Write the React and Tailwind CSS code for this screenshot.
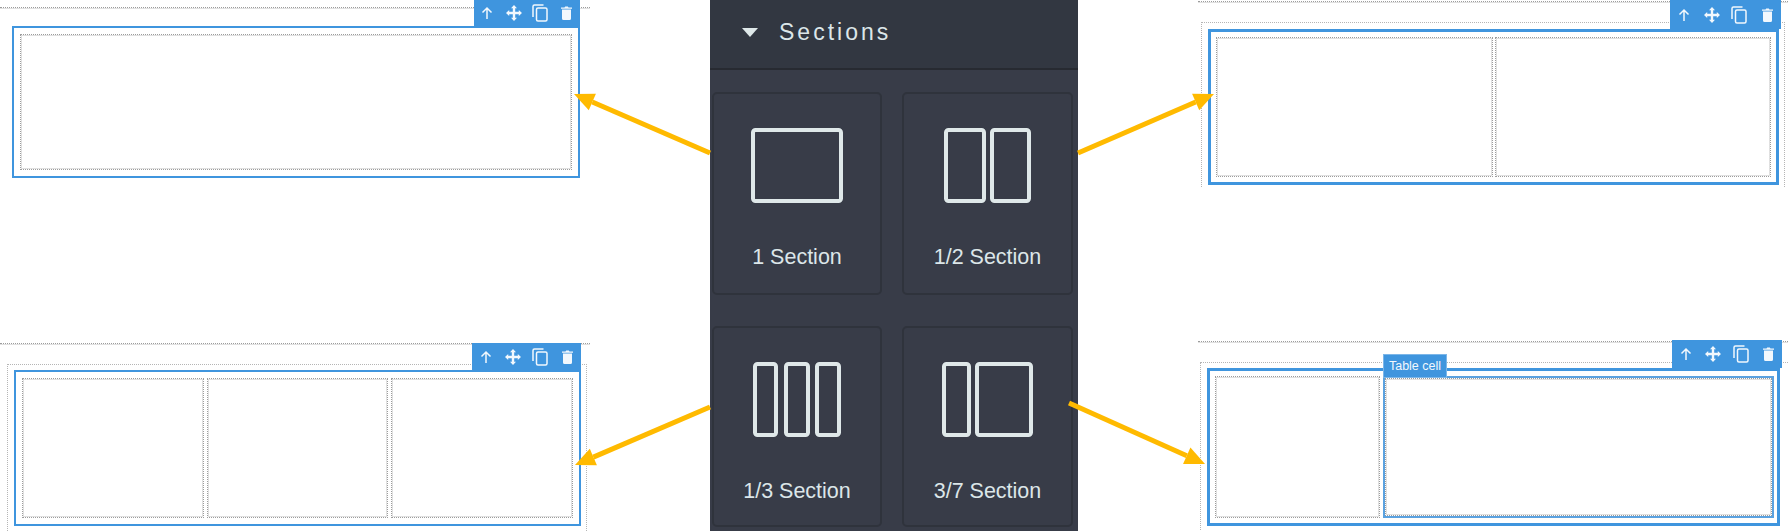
const ToolIcons = () => (
  <>
    <span className="flex items-center justify-center">
      <svg width="14" height="14" viewBox="0 0 14 14" fill="none" stroke="#f2f8fd" strokeWidth="1.5"><path d="M7 13V2M2.5 6.5 7 2l4.5 4.5" /></svg>
    </span>
    <span className="flex items-center justify-center">
      <svg width="16" height="16" viewBox="0 0 16 16" fill="#f2f8fd"><path d="M8 0l3 3.200H9.200v3.600h3.600V5l3.200 3-3.200 3V9.200H9.200v3.600H11L8 16l-3-3.200h1.800V9.200H3.200V11L0 8l3.200-3v1.800h3.600V3.200H5z" /></svg>
    </span>
    <span className="flex items-center justify-center">
      <svg width="16" height="18" viewBox="0 0 16 18" fill="none" stroke="#f2f8fd" strokeWidth="1.500"><path d="M11.500 1H2.500Q1 1 1 2.500V13" /><rect x="4.500" y="4" width="10.500" height="13" rx="1.500" /></svg>
    </span>
    <span className="flex items-center justify-center">
      <svg width="11" height="14" viewBox="0 0 11 14" fill="#f2f8fd"><path d="M0 1.500h3.500L4.200.5h2.600l.7 1H11v1.200H0zM1 3.600h9V12.500Q10 14 8.500 14h-6Q1 14 1 12.500z" /></svg>
    </span>
  </>
);

const Toolbar = ({ className }) => (
  <div className={`absolute grid grid-cols-4 bg-[#3f95de] ${className}`}>
    <ToolIcons />
  </div>
);

const cellBorder = "border border-dotted border-[#9c9c9c] shadow-[inset_0_0_0_1px_#e0e0e0]";
const hairline = "border-t border-dotted border-[#9c9c9c] shadow-[0_1px_0_#e0e0e0]";

const SectionIcon = ({ width, rects }) => (
  <svg width={width} height="75" viewBox={`0 0 ${width} 75`} fill="none" stroke="#dfe8e9" strokeWidth="4">
    {rects.map(([x, w]) => (
      <rect key={x} x={x + 2} y="2" width={w - 4} height="71" rx="2.500" />
    ))}
  </svg>
);

const Card = ({ label, width, rects, className }) => (
  <div className={`flex flex-col items-center rounded-[5px] border-2 border-[#2f333c] bg-[#383c48] ${className}`}>
    <SectionIcon width={width} rects={rects} />
    <div className="mt-[42px] text-[21.500px] leading-6 text-[#dce6e9]">{label}</div>
  </div>
);

const arrows = [
  [710, 153, 574, 94],
  [1078, 153, 1214, 94],
  [710, 407, 575, 465],
  [1069, 403, 1205, 464],
];

const Arrow = ({ a: [x1, y1, x2, y2] }) => {
  const d = Math.hypot(x2 - x1, y2 - y1);
  const ux = (x2 - x1) / d;
  const uy = (y2 - y1) / d;
  const bx = x2 - ux * 20;
  const by = y2 - uy * 20;
  const pts = `${x2},${y2} ${bx - uy * 9},${by + ux * 9} ${bx + uy * 9},${by - ux * 9}`;
  return (
    <g>
      <line x1={x1} y1={y1} x2={bx} y2={by} stroke="#ffba00" strokeWidth="5" />
      <polygon points={pts} fill="#ffba00" />
    </g>
  );
};

export default function App() {
  return (
    <div className="relative flex h-[531px] w-[1788px] overflow-hidden bg-white font-['Liberation_Sans',Arial,sans-serif]">
      {/* left column */}
      <div className="flex w-[710px] shrink-0 flex-col">
        <div className="h-[344px] pt-[7px]">
          <div className={`w-[590px] ${hairline}`} />
          <div className="relative ml-[12px] mt-[18px] h-[152px] w-[568px] border-2 border-[#3f95de] p-[6px]">
            <Toolbar className="-right-[2px] bottom-[calc(100%+2px)] h-[26px] w-[106px]" />
            <div className={`h-full ${cellBorder}`} />
          </div>
        </div>
        <div>
          <div className={`w-[590px] ${hairline}`} />
          <div className="ml-[7px] mt-[20px] h-[167px] w-[580px] border-x border-t border-dotted border-[#b5b5b5] pl-[6px] pt-[5px]">
            <div className="relative h-[156px] w-[567px] border-2 border-[#3f95de] p-[6px]">
              <Toolbar className="-right-[2px] bottom-[calc(100%+1px)] h-[28px] w-[109px]" />
              <div className="grid h-full grid-cols-3 gap-x-[3px]">
                <div className={cellBorder} />
                <div className={cellBorder} />
                <div className={cellBorder} />
              </div>
            </div>
          </div>
        </div>
      </div>

      {/* center panel */}
      <div className="h-full w-[368px] shrink-0 bg-[#383c48]">
        <div className="flex h-[70px] items-center border-b-2 border-[#272a31] bg-[#323741] pb-[4px] pl-[32px]">
          <svg width="16" height="9" viewBox="0 0 16 9" fill="#dfe8e9"><path d="M0 0h16L8 9z" /></svg>
          <span className="ml-[21px] text-[23px] leading-7 tracking-[3px] text-[#dce6e9]">Sections</span>
        </div>
        <div className="ml-[2px] mt-[22px] grid w-[361px] grid-cols-[170px_171px] gap-x-[20px] gap-y-[31px]">
          <Card className="h-[203px] pt-[34px]" label="1 Section" width={92} rects={[[0, 92]]} />
          <Card className="h-[203px] pt-[34px]" label="1/2 Section" width={87} rects={[[0, 42], [46, 41]]} />
          <Card className="h-[201px] pt-[34px]" label="1/3 Section" width={88} rects={[[0, 25], [31, 26], [62, 26]]} />
          <Card className="h-[201px] pt-[34px]" label="3/7 Section" width={91} rects={[[0, 29], [33, 58]]} />
        </div>
      </div>

      {/* right column */}
      <div className="flex flex-1 flex-col">
        <div className="h-[341px] pt-[1px]">
          <div className={`ml-[120px] ${hairline}`} />
          <div className="ml-[123px] mt-[20px] h-[165px] w-[584px] border-x border-t border-dotted border-[#b5b5b5] pl-[6px] pt-[6px]">
            <div className="relative h-[156px] w-[571px] border-[3px] border-[#3f95de] p-[5px]">
              <Toolbar className="-right-[5px] bottom-[calc(100%+3px)] h-[29px] w-[111px]" />
              <div className="grid h-full grid-cols-2 gap-x-[2px]">
                <div className={cellBorder} />
                <div className={cellBorder} />
              </div>
            </div>
          </div>
        </div>
        <div>
          <div className={`ml-[120px] ${hairline}`} />
          <div className="ml-[122px] mt-[20px] h-[168px] border-l border-t border-dotted border-[#b5b5b5] pl-[6px] pt-[5px]">
            <div className="relative h-[158px] w-[573px] border-[3px] border-[#3f95de] py-[5px] pl-[5px] pr-[3px]">
              <Toolbar className="-right-[5px] bottom-[calc(100%+3px)] h-[28px] w-[110px]" />
              <div className="flex h-full gap-x-[3px]">
                <div className={`w-[165px] ${cellBorder}`} />
                <div className="relative flex-1 border-2 border-[#5ba2e0]">
                  <div className="absolute left-[-2px] bottom-full flex h-[24px] w-[64px] items-center justify-center border border-[#7cb6e8] bg-[#3f95de] text-[12.500px] text-[#f2f8fd]">Table cell</div>
                  <div className={`h-full ${cellBorder}`} />
                </div>
              </div>
            </div>
          </div>
        </div>
      </div>

      {/* annotation arrows */}
      <svg className="pointer-events-none absolute inset-0" width="1788" height="531">
        {arrows.map((a) => (
          <Arrow key={a.join()} a={a} />
        ))}
      </svg>
    </div>
  );
}
